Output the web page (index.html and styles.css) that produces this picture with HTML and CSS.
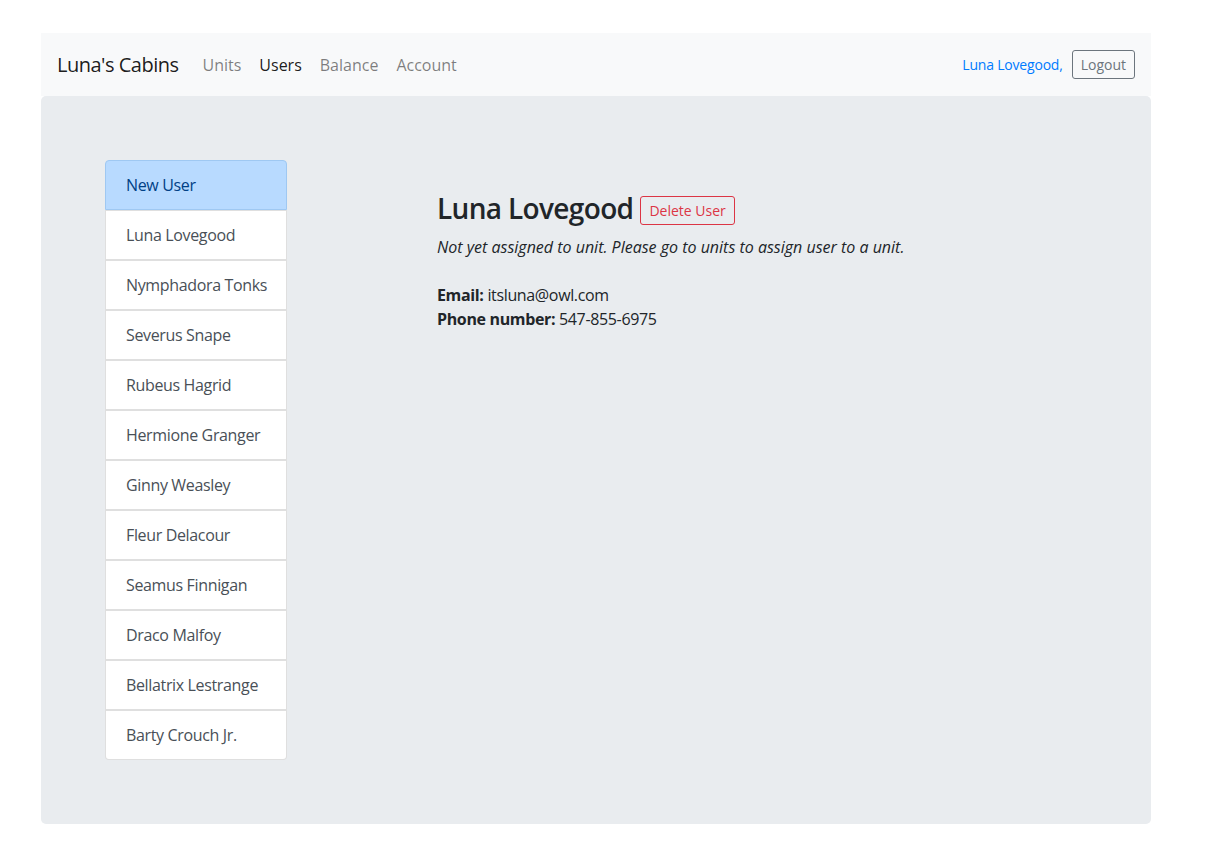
FILE: index.html
```html
<!DOCTYPE html>
<html lang="en">
<head>
<meta charset="utf-8">
<title>Luna's Cabins</title>
<link rel="stylesheet" href="styles.css">
</head>
<body>
<div class="page">
  <nav class="navbar">
    <a class="brand" href="#">Luna's Cabins</a>
    <ul class="nav">
      <li><a class="nav-link" href="#">Units</a></li>
      <li><a class="nav-link active" href="#">Users</a></li>
      <li><a class="nav-link" href="#">Balance</a></li>
      <li><a class="nav-link" href="#">Account</a></li>
    </ul>
    <div class="nav-right">
      <a class="user-link" href="#">Luna Lovegood,</a>
      <button class="btn btn-outline-secondary">Logout</button>
    </div>
  </nav>
  <main class="jumbotron">
    <div class="row">
      <div class="list-group">
        <a class="list-item list-item-primary" href="#">New User</a>
        <a class="list-item" href="#">Luna Lovegood</a>
        <a class="list-item" href="#">Nymphadora Tonks</a>
        <a class="list-item" href="#">Severus Snape</a>
        <a class="list-item" href="#">Rubeus Hagrid</a>
        <a class="list-item" href="#">Hermione Granger</a>
        <a class="list-item" href="#">Ginny Weasley</a>
        <a class="list-item" href="#">Fleur Delacour</a>
        <a class="list-item" href="#">Seamus Finnigan</a>
        <a class="list-item" href="#">Draco Malfoy</a>
        <a class="list-item" href="#">Bellatrix Lestrange</a>
        <a class="list-item" href="#">Barty Crouch Jr.</a>
      </div>
      <section class="detail">
        <div class="detail-head">
          <h3 class="detail-name">Luna Lovegood</h3>
          <button class="btn btn-outline-danger">Delete User</button>
        </div>
        <p class="note">Not yet assigned to unit. Please go to units to assign user to a unit.</p>
        <p class="info"><strong>Email:</strong> itsluna@owl.com<br><strong>Phone number:</strong> 547-855-6975</p>
      </section>
    </div>
  </main>
</div>
</body>
</html>
```
FILE: styles.css
```css
* { box-sizing: border-box; }
html, body { margin: 0; padding: 0; background: #fff; }
body {
  font-family: "Open Sans", "Noto Sans", sans-serif;
  font-size: 16px;
  line-height: 1.5;
  color: #212529;
  letter-spacing: -0.35px;
}
a { text-decoration: none; }

.page {
  width: 1110px;
  margin-left: 41px;
  padding-top: 33px;
}

.navbar {
  display: flex;
  align-items: center;
  height: 63px;
  padding: 0 16px;
  background: #f8f9fa;
}
.brand {
  font-size: 20px;
  line-height: 30px;
  color: rgba(0,0,0,.9);
  margin-right: 15px;
  letter-spacing: -0.5px;
}
.nav {
  display: flex;
  list-style: none;
  margin: 0;
  padding: 0;
}
.nav-link {
  display: block;
  padding: 8px 9px;
  color: rgba(0,0,0,.5);
  letter-spacing: 0;
}
.nav-link.active { color: rgba(0,0,0,.9); }
.nav-right {
  margin-left: auto;
  display: flex;
  align-items: center;
}
.user-link {
  font-size: 14px;
  color: #007bff;
  margin-right: 9px;
  letter-spacing: -0.2px;
}

.btn {
  font-family: inherit;
  font-size: 14px;
  line-height: 1.5;
  padding: 3px 8px;
  border-radius: 3px;
  background: transparent;
  border: 1px solid;
  cursor: pointer;
  letter-spacing: 0;
}
.btn-outline-secondary { color: #6c757d; border-color: #6c757d; }
.btn-outline-danger { color: #dc3545; border-color: #dc3545; }

.jumbotron {
  background: #e9ecef;
  border-radius: 5px;
  padding: 64px 32px;
}
.row { display: flex; align-items: flex-start; }

.list-group {
  width: 182px;
  margin-left: 32px;
  display: flex;
  flex-direction: column;
}
.list-item {
  display: block;
  padding: 12px 20px;
  line-height: 24px;
  height: 50px;
  white-space: nowrap;
  background: #fff;
  color: #495057;
  border: 1px solid rgba(0,0,0,.125);
}
.list-item:first-child {
  border-top-left-radius: 4px;
  border-top-right-radius: 4px;
}
.list-item:last-child {
  border-bottom-left-radius: 4px;
  border-bottom-right-radius: 4px;
}
.list-item-primary {
  background: #b8daff;
  color: #004085;
  border-color: #9fc8f2;
}

.detail {
  margin-left: 150px;
  padding-top: 32px;
}
.detail-head {
  display: flex;
  align-items: center;
}
.detail-name {
  margin: 0;
  font-size: 28px;
  font-weight: 600;
  line-height: 1.2;
  letter-spacing: -0.65px;
}
.detail-head .btn { margin-left: 7px; margin-top: 4px; }
.note {
  margin: 9px 0 24px;
  font-style: italic;
  letter-spacing: 0;
}
.info { margin: 0; }
```
